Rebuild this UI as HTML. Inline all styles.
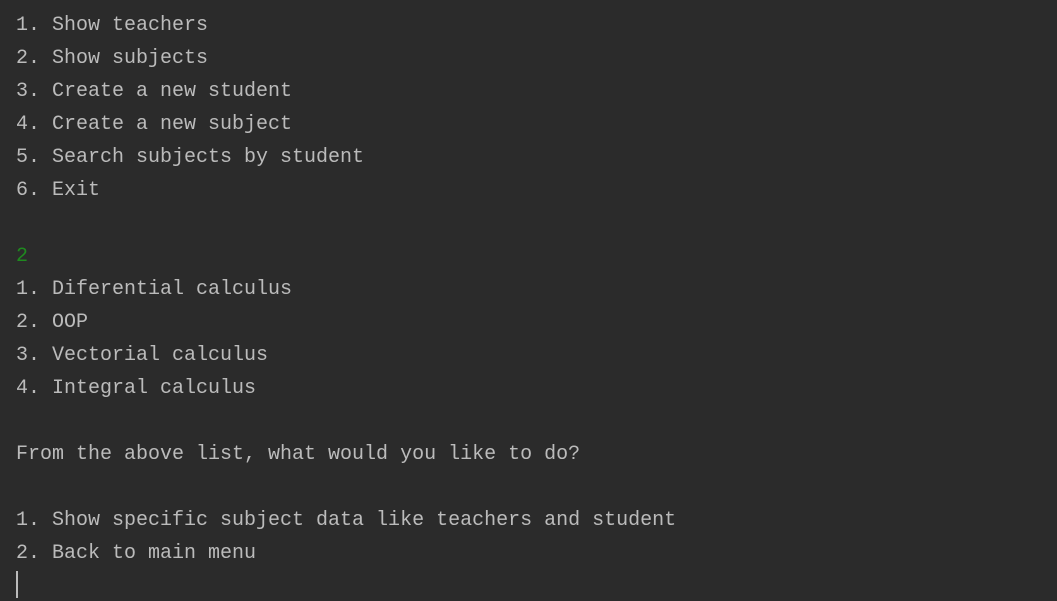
<!DOCTYPE html>
<html><head><style>
html,body{margin:0;padding:0;background:#2b2b2b;width:1057px;height:601px;overflow:hidden}
pre{margin:0;position:absolute;left:16px;top:9px;font-family:"Liberation Mono","DejaVu Sans Mono",monospace;font-size:20px;line-height:33px;color:#bbbbbb}
.g{color:#1f8a1f}
.cur{position:absolute;left:16px;top:571px;width:2px;height:27px;background:#bbbbbb}
</style></head><body>
<pre>1. Show teachers
2. Show subjects
3. Create a new student
4. Create a new subject
5. Search subjects by student
6. Exit

<span class="g">2</span>
1. Diferential calculus
2. OOP
3. Vectorial calculus
4. Integral calculus

From the above list, what would you like to do?

1. Show specific subject data like teachers and student
2. Back to main menu</pre>
<div class="cur"></div>
</body></html>
